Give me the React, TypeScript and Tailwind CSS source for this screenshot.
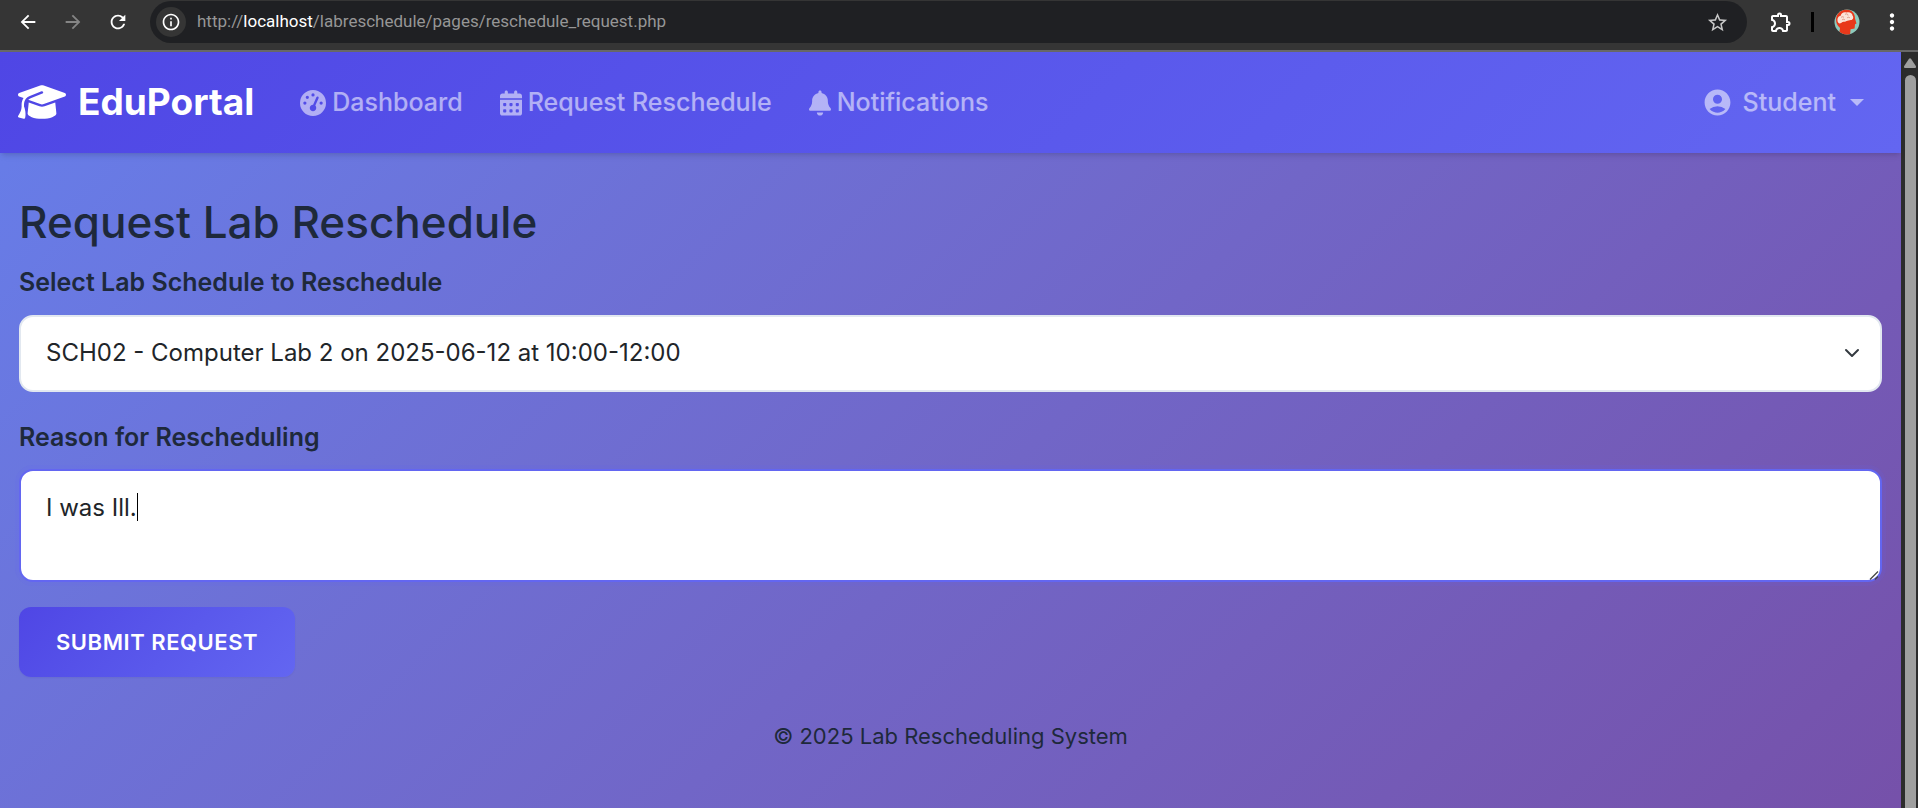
import { useState } from "react";
import type { ReactNode } from "react";
import { FaBell, FaCalendarDays, FaGaugeHigh, FaGraduationCap } from "react-icons/fa6";
import { MdAccountCircle, MdArrowBack, MdArrowForward, MdInfoOutline, MdMoreVert, MdOutlineExtension, MdRefresh, MdStarBorder } from "react-icons/md";

function ToolButton({ label, className = "", children }: { label: string; className?: string; children: ReactNode }) {
  return (
    <button type="button" aria-label={label} className={`flex size-7 shrink-0 items-center justify-center ${className}`}>
      {children}
    </button>
  );
}

function Avatar() {
  return (
    <svg viewBox="0 0 26 26" className="size-[26px]" aria-hidden="true">
      <clipPath id="avatar-clip">
        <circle cx="13" cy="13" r="12.5" />
      </clipPath>
      <g clipPath="url(#avatar-clip)">
        <rect width="26" height="26" fill="#8ccabc" />
        <path d="M2 10C3 3 8 .5 12 .5c6 0 9 4 9 9l1.500 5-1.500.8-.4 4.200-4 .8L16 26H5l1-7C3 16 2 14 2 10z" fill="#e8381a" />
        <path d="M3.500 12c-.5-3 1-5 3-5 .5-3 3.500-4.500 6-3.500 3-1 6 .5 6 3 1.500 2 .5 4.500-1.500 4.500-2 .5-3 .5-4.500 1-1 1-2.500.5-4 1-2 2-4.500 2-5-1z" fill="#fbe3d8" />
        <path d="M7 8.500c1-1 2-1 3 0m1-3c1-1 3-1 3 1m-6 4.500c1-1 2-1 3 0m2-2c1-1 2-1 3 0" fill="none" stroke="#d98a74" strokeWidth=".8" />
      </g>
    </svg>
  );
}

function BrowserBar() {
  return (
    <header className="flex h-[52px] items-start border-b-2 border-[#686868] bg-[#353535] pt-px font-['Roboto',sans-serif] text-white">
      <div className="flex h-[42px] items-center gap-[17px] pr-[18px] pl-[14px]">
        <ToolButton label="Back"><MdArrowBack className="size-[22px]" /></ToolButton>
        <ToolButton label="Forward" className="text-[#858585]"><MdArrowForward className="size-[22px]" /></ToolButton>
        <ToolButton label="Reload"><MdRefresh className="size-[22px]" /></ToolButton>
      </div>
      <div className="flex h-[42px] min-w-0 flex-1 items-center rounded-full bg-[#1f2023] pr-4 pl-1.5">
        <button type="button" aria-label="View site information" className="flex size-[30px] shrink-0 items-center justify-center rounded-full bg-[#353535]">
          <MdInfoOutline className="size-5" />
        </button>
        <div className="min-w-0 flex-1 truncate pl-[11px] text-[17px] text-[#969696]">
          http://<span className="text-white">localhost</span>/labreschedule/pages/reschedule_request.php
        </div>
        <ToolButton label="Bookmark this page" className="text-[#c7c7c7]"><MdStarBorder className="size-[23px]" /></ToolButton>
      </div>
      <div className="flex h-[42px] items-center pr-3 pl-5">
        <ToolButton label="Extensions"><MdOutlineExtension className="size-6" /></ToolButton>
        <span className="ml-4 h-5 w-[3px] bg-black" />
        <ToolButton label="Profile" className="ml-[19px]"><Avatar /></ToolButton>
        <ToolButton label="Menu" className="ml-[17px]"><MdMoreVert className="size-[26px]" /></ToolButton>
      </div>
    </header>
  );
}

function NavLink({ icon, children }: { icon: ReactNode; children: string }) {
  return (
    <a href="#" className="flex items-center gap-1.5 text-white/55">
      {icon}
      {children}
    </a>
  );
}

function NavBar() {
  return (
    <nav className="relative flex h-[101px] shrink-0 items-center bg-linear-135 from-[#4f46e5] to-[#6366f1] px-[18px] text-[25px] font-medium shadow-md">
      <a href="#" className="flex items-center gap-3 pb-0.5 text-[37px] font-bold text-white">
        <FaGraduationCap className="h-10 w-12" />
        EduPortal
      </a>
      <div className="ml-[46px] flex items-center gap-[37px]">
        <NavLink icon={<FaGaugeHigh className="size-[26px]" />}>Dashboard</NavLink>
        <NavLink icon={<FaCalendarDays className="h-[26px] w-[22px]" />}>Request Reschedule</NavLink>
        <NavLink icon={<FaBell className="h-[26px] w-[22px]" />}>Notifications</NavLink>
      </div>
      <button type="button" className="mr-[19px] ml-auto flex items-center text-white/55">
        <MdAccountCircle className="mr-2.5 size-[31px]" />
        Student
        <svg viewBox="0 0 14 7" className="ml-3.5 h-[7px] w-3.5" fill="currentColor" aria-hidden="true">
          <path d="M0 0h14L7 7z" />
        </svg>
      </button>
    </nav>
  );
}

function ScrollBar() {
  return (
    <div className="flex w-[17px] shrink-0 flex-col items-center bg-[#2c2c2c] pt-1.5 pl-px" aria-hidden="true">
      <svg viewBox="0 0 12 10" className="h-2.5 w-3" fill="#9f9f9f">
        <path d="M5 .8a1.300 1.300 0 0 1 2 0l4.800 7.200c.5.900 0 2-1 2H1.200c-1 0-1.500-1.100-1-2z" />
      </svg>
      <div className="mt-[7px] w-[11px] flex-1 rounded-t-full bg-[#9f9f9f]" />
    </div>
  );
}

export default function App() {
  const [reason, setReason] = useState("I was Ill.");
  return (
    <div className="flex min-h-screen flex-col font-['Inter',sans-serif] text-[#1e293b]">
      <BrowserBar />
      <div className="flex flex-1">
        <div className="flex min-w-0 flex-1 flex-col bg-linear-135 from-[#667eea] to-[#764ba2] bg-[length:100%_1080px]">
          <NavBar />
          <main className="px-[19px] pt-[43px]">
            <h1 className="text-[44px] leading-[52px] font-medium">Request Lab Reschedule</h1>
            <form onSubmit={(event) => event.preventDefault()}>
              <label htmlFor="schedule" className="mt-[15px] block text-[25px] leading-[38px] font-semibold">
                Select Lab Schedule to Reschedule
              </label>
              <div className="relative mt-3.5">
                <select id="schedule" className="block h-[77px] w-full appearance-none rounded-[14px] border-2 border-[#e2e8f0] bg-white px-[25px] pb-0.5 text-[24px] text-[#212529]">
                  <option>SCH02 - Computer Lab 2 on 2025-06-12 at 10:00-12:00</option>
                </select>
                <svg viewBox="0 0 16 16" className="pointer-events-none absolute top-[30px] right-[22px] size-4" fill="none" stroke="#343a40" strokeWidth="2" strokeLinecap="round" strokeLinejoin="round" aria-hidden="true">
                  <path d="m2 5 6 6 6-6" />
                </svg>
              </div>
              <label htmlFor="reason" className="mt-[26px] block text-[25px] leading-[38px] font-semibold">
                Reason for Rescheduling
              </label>
              <div className="relative mt-[13px]">
                <textarea
                  id="reason"
                  value={reason}
                  onChange={(event) => setReason(event.target.value)}
                  className="block h-[113px] w-full resize-none rounded-[14px] border-2 border-[#6366f1] bg-white px-[25px] py-[19px] text-[24px] leading-9 text-[#212529] ring-4 ring-[#6366f1]/10 outline-none"
                />
                <span className="pointer-events-none absolute top-6 left-[118px] h-7 w-px bg-black" aria-hidden="true" />
                <svg viewBox="0 0 10 10" className="pointer-events-none absolute right-[3px] bottom-[2px] size-2.5" fill="none" stroke="#444" strokeWidth="1.300" aria-hidden="true">
                  <path d="M1 9.500 9 1.500M6 9.500 9 6.500" />
                </svg>
              </div>
              <button type="submit" className="mt-[25px] h-[70px] rounded-[12px] bg-linear-135 from-[#4f46e5] to-[#6366f1] px-[37px] text-[22px] font-semibold tracking-wide text-white uppercase shadow-xs">
                Submit Request
              </button>
            </form>
          </main>
          <footer className="py-[43px] text-center text-[22px] leading-8">© 2025 Lab Rescheduling System</footer>
        </div>
        <ScrollBar />
      </div>
    </div>
  );
}
